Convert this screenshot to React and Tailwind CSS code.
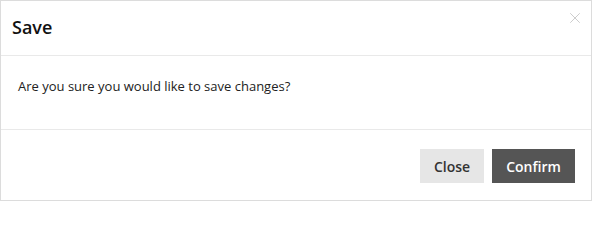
import { X } from 'lucide-react';

export default function App() {
  return (
    <div className="w-[592px] h-[201px] bg-white border border-[#dcdcdc] flex flex-col" style={{ fontFamily: '"Open Sans", sans-serif' }}>
      <div className="h-[55px] border-b border-[#e9e9e9] flex items-start justify-between pl-[11px] pr-[7px]">
        <h4 className="mt-[14px] text-[18px] leading-[24px] font-semibold text-[#111]">Save</h4>
        <button className="mt-[8px] text-[#cccccc]">
          <X className="w-[18px] h-[18px]" strokeWidth={1.3} />
        </button>
      </div>
      <div className="h-[74px] border-b border-[#e9e9e9] pl-[17px] pt-[20px]">
        <p className="text-[13px] leading-[20px] text-[#222]">Are you sure you would like to save changes?</p>
      </div>
      <div className="flex-1 flex items-start justify-end gap-[8px] pt-[19px] pr-[16px]">
        <button className="w-[64px] h-[34px] bg-[#e6e6e6] text-[#333] text-[14px] font-semibold">Close</button>
        <button className="w-[83px] h-[34px] bg-[#555555] text-white text-[14px] font-semibold">Confirm</button>
      </div>
    </div>
  );
}
